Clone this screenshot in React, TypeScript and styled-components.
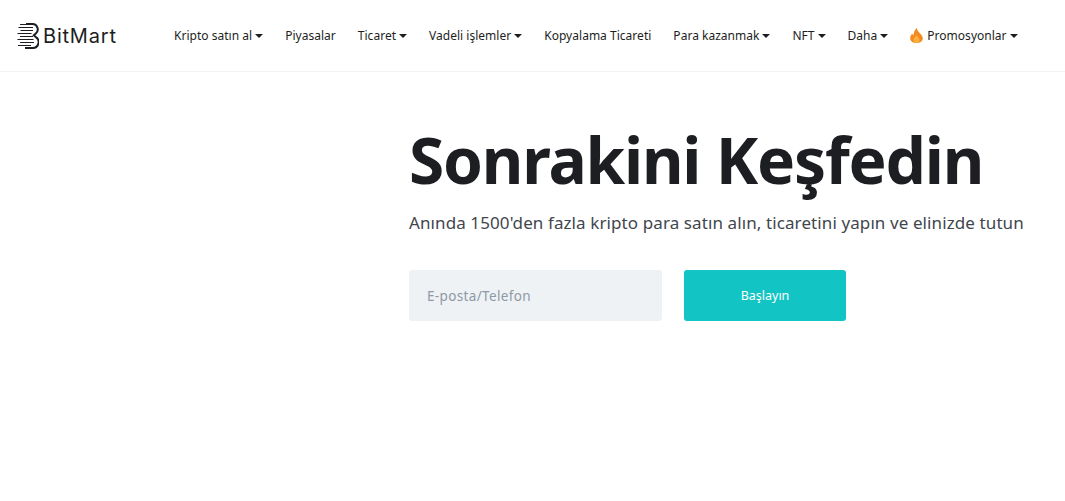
import styled, { createGlobalStyle } from 'styled-components';

const navItems = [
  { label: 'Kripto satın al', caret: true },
  { label: 'Piyasalar' },
  { label: 'Ticaret', caret: true },
  { label: 'Vadeli işlemler', caret: true },
  { label: 'Kopyalama Ticareti' },
  { label: 'Para kazanmak', caret: true },
  { label: 'NFT', caret: true },
  { label: 'Daha', caret: true },
  { label: 'Promosyonlar', caret: true, fire: true },
];

const LogoMark = () => (
  <svg width="22" height="26" viewBox="0 0 22 26" fill="none">
    <path
      d="M9 1h6.500a5.300 5.300 0 0 1 3.300 9.400l-2 1.900 2.200 1.900a5.900 5.900 0 0 1-3.500 10.800H8"
      stroke="#1c1e22"
      strokeWidth="2"
    />
    <path
      d="M3 1.500h12M1.500 4.500h14.500M3.500 7.500h12.500M.5 10.500h14M3 13.500h13M.5 16.500h16M3 19.500h14M1 22.500h13"
      stroke="#1c1e22"
      strokeWidth="1.200"
    />
  </svg>
);

const Fire = () => (
  <svg width="13" height="15" viewBox="0 0 13 15">
    <path
      d="M6.800 0c.4 2.300 1.400 3.400 2.600 4.700C10.900 6.300 12.800 8 12.800 10.200 12.800 13 10.200 15 6.500 15 2.800 15 .2 13 .2 10.200c0-2 1-3.500 2.100-4.700.2 1 .6 1.600 1.200 2C3.600 4.500 4.700 1.800 6.800 0z"
      fill="#f58a1f"
    />
    <path
      d="M6.600 7c.3 1.300 2.900 2.700 2.900 4.900 0 1.800-1.300 3.100-3 3.100s-3-1.300-3-3.100C3.500 9.700 6 8.700 6.600 7z"
      fill="#fbb040"
    />
  </svg>
);

const App = () => {
  return (
    <>
      <GlobalStyle />
      <Header>
        <Logo>
          <LogoMark />
          <LogoText>BitMart</LogoText>
        </Logo>
        <Nav>
          {navItems.map((item) => (
            <NavItem key={item.label}>
              {item.fire && <Fire />}
              <span>{item.label}</span>
              {item.caret && <Caret />}
            </NavItem>
          ))}
        </Nav>
      </Header>
      <Hero>
        <Title>Sonrakini Keşfedin</Title>
        <Subtitle>Anında 1500'den fazla kripto para satın alın, ticaretini yapın ve elinizde tutun</Subtitle>
        <SignUp>
          <EmailInput placeholder="E-posta/Telefon" />
          <StartButton>Başlayın</StartButton>
        </SignUp>
      </Hero>
    </>
  );
};

export default App;

const GlobalStyle = createGlobalStyle`
  html, body {
    margin: 0;
    background: #fff;
    font-family: 'Noto Sans', 'Liberation Sans', sans-serif;
  }
`;

const Header = styled.header`
  display: flex;
  align-items: center;
  height: 71px;
  padding-left: 17px;
  border-bottom: 1px solid #f1f4f5;
`;

const Logo = styled.div`
  display: flex;
  align-items: center;
  gap: 4px;
  width: 157px;
  color: #1c1e22;
`;

const LogoText = styled.span`
  font-family: Inter, sans-serif;
  font-size: 20px;
  font-weight: 400;
  letter-spacing: 0.8px;
`;

const Nav = styled.nav`
  display: flex;
  align-items: center;
  gap: 22px;
`;

const NavItem = styled.div`
  display: flex;
  align-items: center;
  gap: 3px;
  font-size: 12px;
  letter-spacing: 0.02px;
  color: #1c1e22;
  white-space: nowrap;

  svg {
    margin-right: 1px;
  }
`;

const Caret = styled.i`
  width: 0;
  height: 0;
  border-left: 4px solid transparent;
  border-right: 4px solid transparent;
  border-top: 4px solid #1c1e22;
`;

const Hero = styled.main`
  padding: 46px 0 0 409px;
`;

const Title = styled.h1`
  margin: 0;
  font-family: 'Noto Sans', sans-serif;
  font-size: 64px;
  line-height: 84px;
  font-weight: 700;
  letter-spacing: -1.2px;
  color: #1c1e22;
  white-space: nowrap;
`;

const Subtitle = styled.p`
  margin: 9px 0 0;
  font-size: 17px;
  line-height: 24px;
  letter-spacing: 0.1px;
  color: #41464d;
  white-space: nowrap;
`;

const SignUp = styled.form`
  display: flex;
  gap: 22px;
  margin-top: 35px;
`;

const EmailInput = styled.input`
  box-sizing: border-box;
  width: 253px;
  height: 51px;
  padding: 0 18px;
  border: none;
  border-radius: 3px;
  background: #eef2f5;
  font-family: 'Noto Sans', sans-serif;
  font-size: 13.5px;
  letter-spacing: 0.35px;

  &::placeholder {
    color: #8e99a5;
    opacity: 1;
  }
`;

const StartButton = styled.button`
  width: 162px;
  height: 51px;
  border: none;
  border-radius: 3px;
  background: #13c4c4;
  color: #fff;
  font-family: 'Noto Sans', sans-serif;
  font-size: 12.5px;
`;
